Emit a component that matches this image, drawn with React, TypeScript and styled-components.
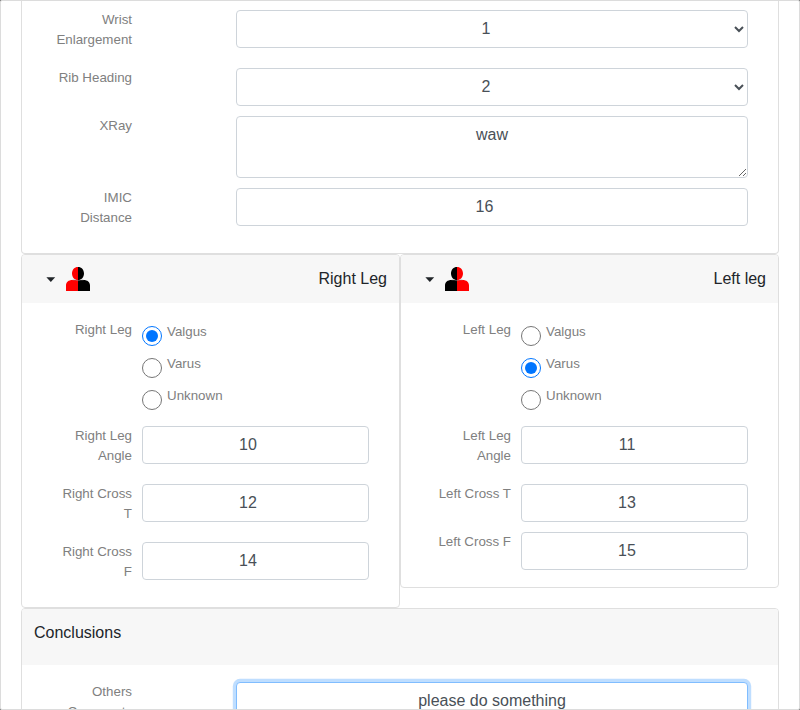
import React from "react";
import styled, { createGlobalStyle, css } from "styled-components";

const GlobalStyle = createGlobalStyle`
  *, *::before, *::after { box-sizing: border-box; }
  html, body { margin: 0; background: #7f7f7f; overflow: hidden; }
  body {
    font-family: "Liberation Sans", Arial, sans-serif;
    font-size: 16px;
    line-height: 24px;
    color: #212529;
  }
`;

const Dialog = styled.main`
  height: 710px;
  padding: 0 20px;
  overflow: hidden;
  background: #fff;
  border: 1px solid #dcdcdc;
  border-radius: 2px;
`;

const Card = styled.section<{ $continued?: boolean }>`
  flex: 1;
  background: #fff;
  border: 1px solid #dfdfdf;
  border-radius: ${(p) => (p.$continued ? "0 0 4px 4px" : "4px")};
  ${(p) => p.$continued && "border-top: 0;"}
`;

const CardPair = styled.div`
  display: flex;
  align-items: flex-start;
`;

const LegHeader = styled.header`
  display: flex;
  align-items: center;
  height: 48px;
  padding: 0 12px 0 24px;
  background: #f7f7f7;
  border-radius: 3px 3px 0 0;
`;

const LegTitle = styled.span`
  margin-left: auto;
`;

const CaretSvg = styled.svg`
  display: block;
  width: 10px;
  height: 5px;
  margin: 1px 10px 0 0;
`;

const ConclusionHeader = styled.header`
  height: 56px;
  padding: 12px;
  background: #f7f7f7;
  border-radius: 3px 3px 0 0;
`;

const Fields = styled.div<{ $top?: number }>`
  padding: ${(p) => p.$top ?? 17}px 30px 7px;
`;

const Row = styled.div<{ $wide?: boolean }>`
  display: grid;
  grid-template-columns: 80px minmax(0, 1fr);
  column-gap: ${(p) => (p.$wide ? 104 : 10)}px;
  align-items: start;
  margin-bottom: 10px;
`;

const Label = styled.label`
  margin-bottom: 8px;
  font-size: 13.333px;
  line-height: 20px;
  text-align: right;
  color: #808080;
`;

const control = css`
  display: block;
  width: 100%;
  height: 38px;
  margin: 0;
  padding: 6px 12px;
  font: inherit;
  text-align: center;
  color: #495057;
  background: #fff;
  border: 1px solid #ced4da;
  border-radius: 4px;
  outline: 0;
`;

const NumberInput = styled.input.attrs({ type: "number" })`
  ${control}
`;

const Select = styled.select`
  ${control}
  padding-top: 5px;
  padding-bottom: 7px;
`;

const TextArea = styled.textarea<{ $active?: boolean }>`
  ${control}
  height: 62px;
  resize: vertical;
  ${(p) =>
    p.$active &&
    css`
      border-color: #80bdff;
      box-shadow: 0 0 0 3.2px rgba(0, 123, 255, 0.25);
    `}
`;

const Option = styled.label`
  display: flex;
  gap: 5px;
  height: 32px;
  padding-top: 2px;
  font-size: 13.333px;
  line-height: 20px;
  color: #808080;
`;

const Radio = styled.input`
  width: 20px;
  height: 20px;
  margin: 4px 0 0;
`;

const PersonSvg = styled.svg`
  display: block;
  width: 24px;
  height: 24px;
`;

function Caret() {
  return (
    <CaretSvg viewBox="0 0 10 5">
      <path fill="#212529" d="M0.4 0.3h8.8L4.8 4.9z" />
    </CaretSvg>
  );
}

function Person({ left, right }: { left: string; right: string }) {
  return (
    <PersonSvg viewBox="0 0 24 24">
      <path fill={left} d="M12 0C8.5 0 6 2.7 6 6.5S8.5 13 12 13zM12 13H6.5C2.5 13 0 15.2 0 18.5V24h12z" />
      <path fill={right} d="M12 0c3.5 0 6 2.7 6 6.5S15.5 13 12 13zM12 13h5.5c4 0 6.5 2.2 6.5 5.5V24H12z" />
      <path fill="none" stroke="#999" strokeWidth="0.5" d="M6.5 12.9h2.7c1.7 1 3.9 1 5.6 0h2.7" />
    </PersonSvg>
  );
}

interface LegProps {
  title: string;
  side: string;
  colors: [string, string];
  chosen: string;
  values: [string, string][];
}

function LegCard({ title, side, colors, chosen, values }: LegProps) {
  return (
    <Card>
      <LegHeader>
        <Caret />
        <Person left={colors[0]} right={colors[1]} />
        <LegTitle>{title}</LegTitle>
      </LegHeader>
      <Fields>
        <Row>
          <Label>{side} Leg</Label>
          <div>
            {["Valgus", "Varus", "Unknown"].map((name) => (
              <Option key={name}>
                <Radio type="radio" name={side} defaultChecked={name === chosen} />
                {name}
              </Option>
            ))}
          </div>
        </Row>
        {values.map(([label, value]) => (
          <Row key={label}>
            <Label>{label}</Label>
            <NumberInput defaultValue={value} />
          </Row>
        ))}
      </Fields>
    </Card>
  );
}

export default function App() {
  return (
    <>
      <GlobalStyle />
      <Dialog>
        <Card $continued>
          <Fields $top={9}>
            <Row $wide>
              <Label>Wrist Enlargement</Label>
              <Select defaultValue="1">
                <option>1</option>
                <option>2</option>
              </Select>
            </Row>
            <Row $wide>
              <Label>Rib Heading</Label>
              <Select defaultValue="2">
                <option>1</option>
                <option>2</option>
              </Select>
            </Row>
            <Row $wide>
              <Label>XRay</Label>
              <TextArea defaultValue="waw" />
            </Row>
            <Row $wide>
              <Label>IMIC Distance</Label>
              <NumberInput defaultValue="16" />
            </Row>
          </Fields>
        </Card>
        <CardPair>
          <LegCard
            title="Right Leg"
            side="Right"
            colors={["#f00", "#000"]}
            chosen="Valgus"
            values={[["Right Leg Angle", "10"], ["Right Cross T", "12"], ["Right Cross F", "14"]]}
          />
          <LegCard
            title="Left leg"
            side="Left"
            colors={["#000", "#f00"]}
            chosen="Varus"
            values={[["Left Leg Angle", "11"], ["Left Cross T", "13"], ["Left Cross F", "15"]]}
          />
        </CardPair>
        <Card>
          <ConclusionHeader>Conclusions</ConclusionHeader>
          <Fields>
            <Row $wide>
              <Label>Others Comments</Label>
              <TextArea $active defaultValue="please do something" />
            </Row>
          </Fields>
        </Card>
      </Dialog>
    </>
  );
}
